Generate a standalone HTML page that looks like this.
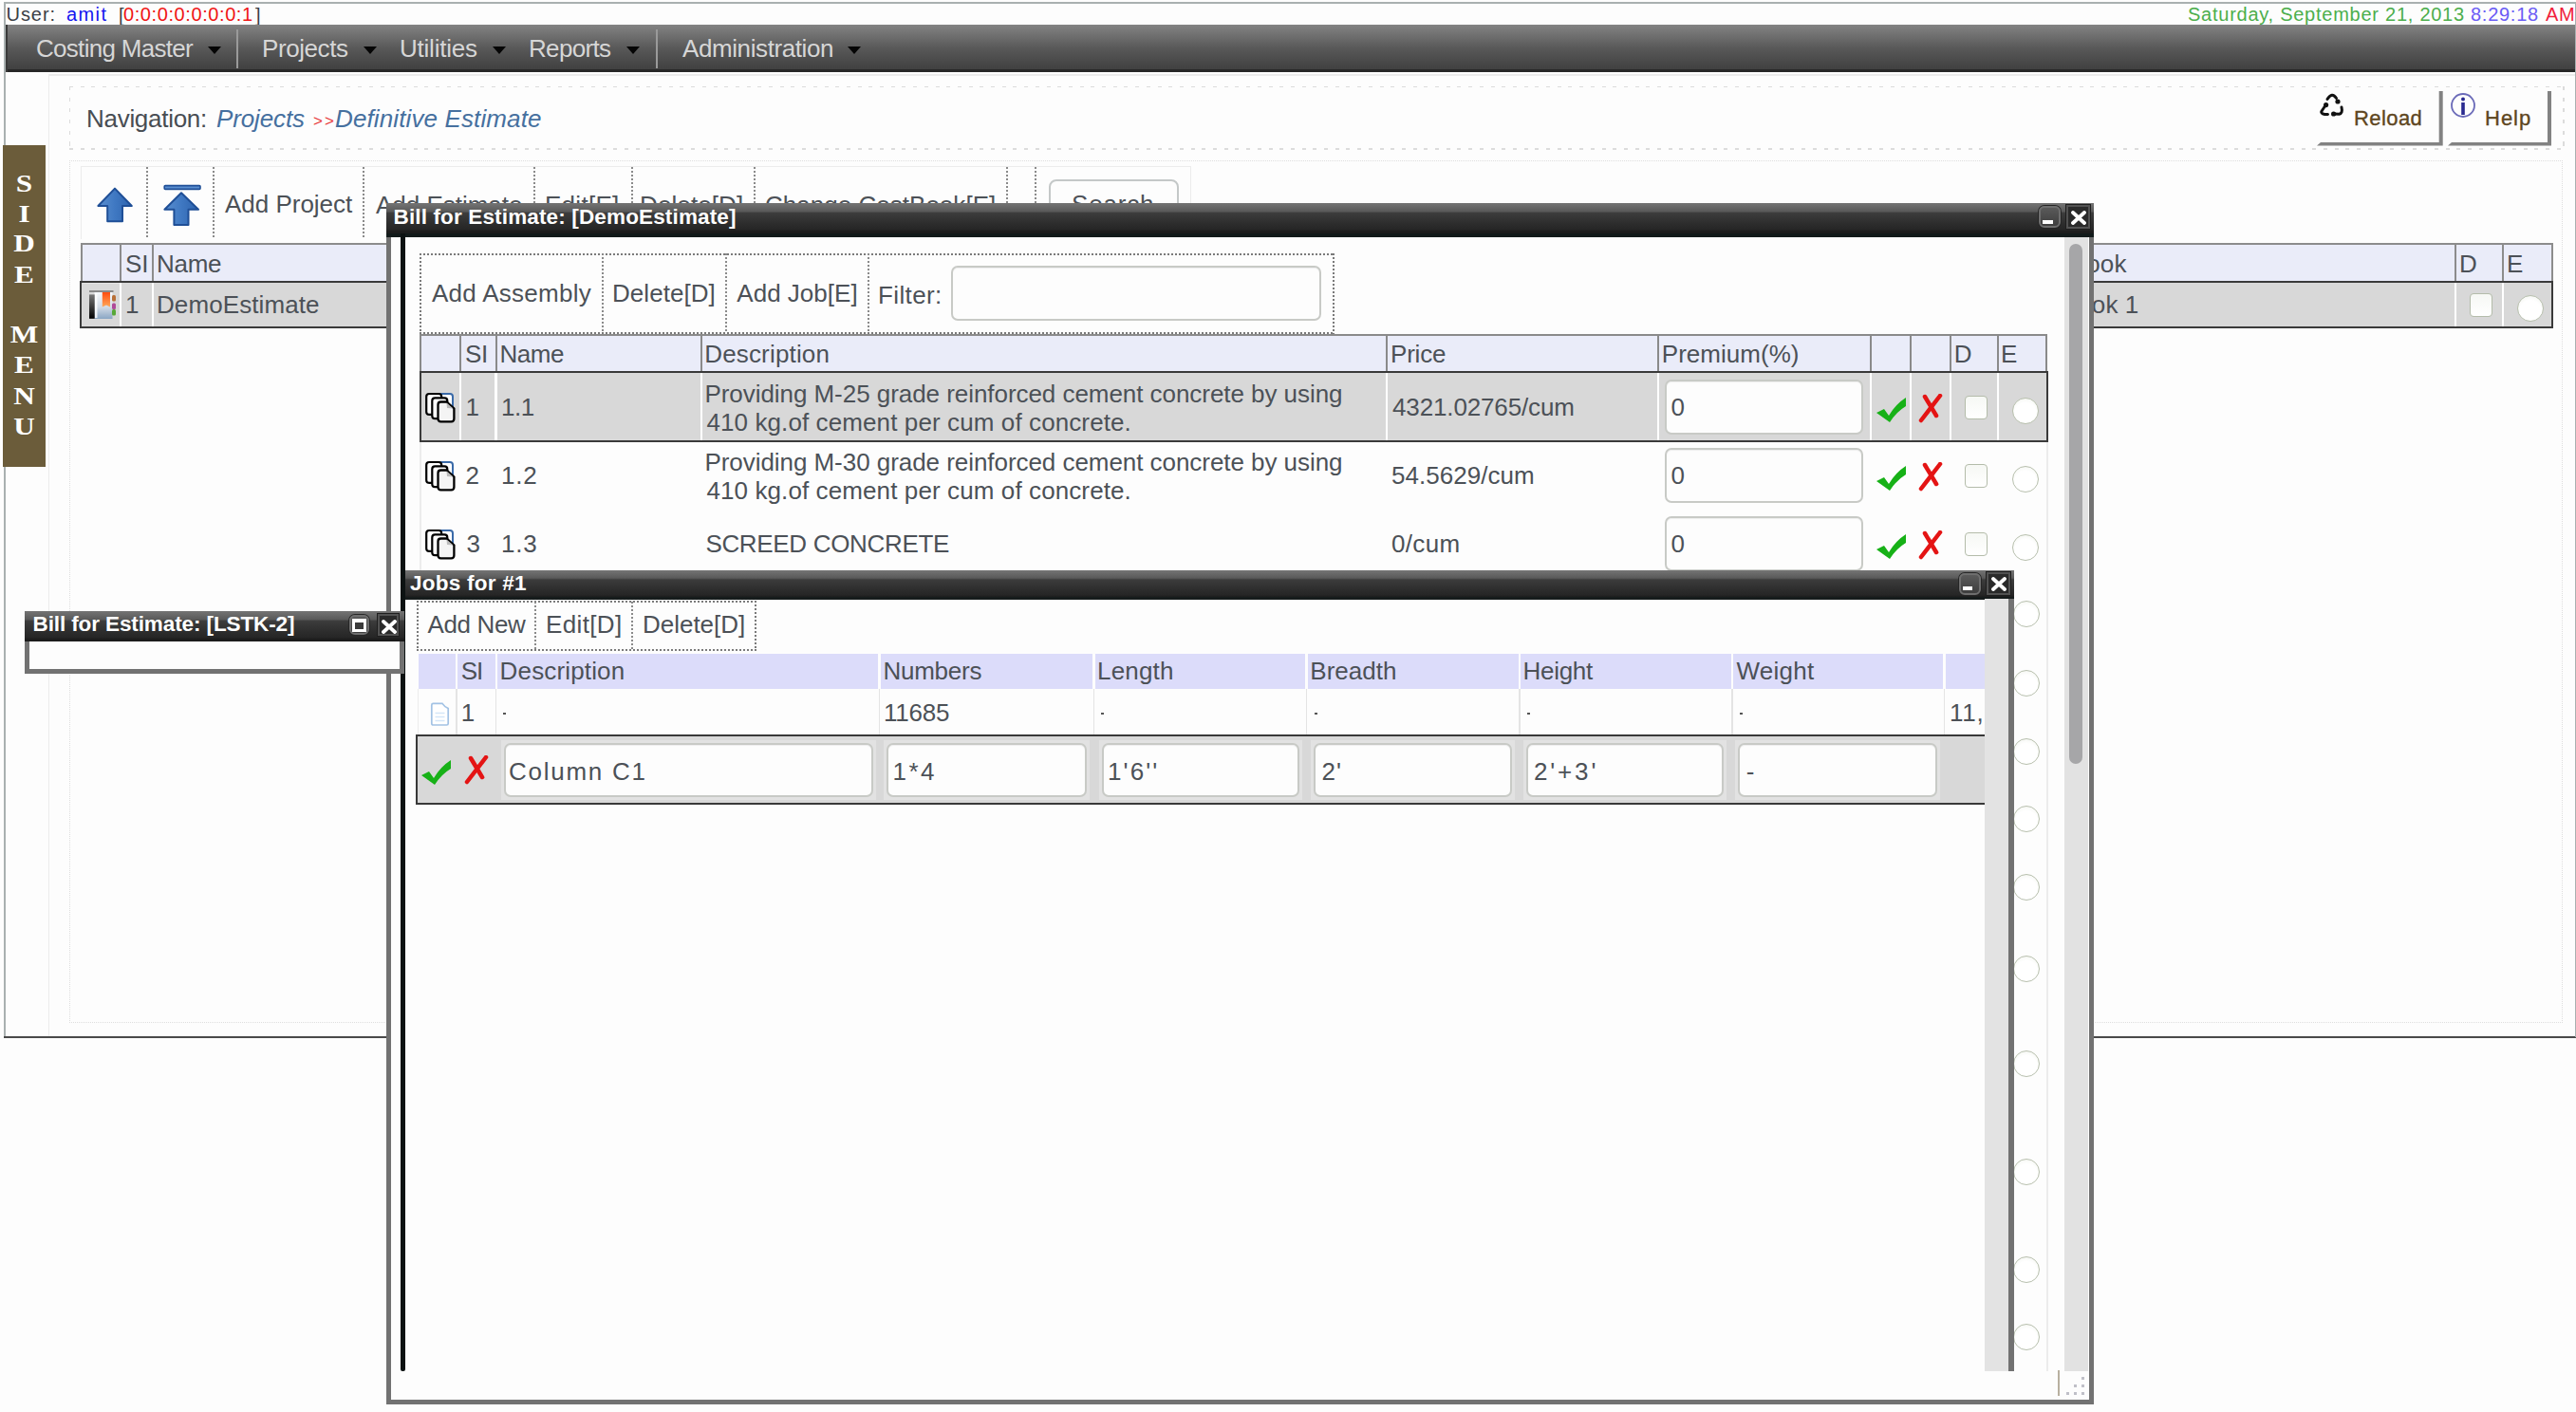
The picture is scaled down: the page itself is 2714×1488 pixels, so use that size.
<!DOCTYPE html>
<html><head><meta charset="utf-8"><title>Costing</title><style>html,body{margin:0;padding:0;width:2714px;height:1488px;overflow:hidden;background:#fdfdfd}body>div,body>svg{position:absolute;display:block}.t{white-space:pre;line-height:1}</style></head><body>
<div style="left:5.0px;top:2.0px;width:2709.0px;height:1.5px;background:#a9b0b0"></div>
<div style="left:4.0px;top:2.0px;width:2.0px;height:1091.0px;background:#a9b0b0"></div>
<div style="left:4.0px;top:1091.5px;width:2710.0px;height:2.0px;background:#4a4a4a"></div>
<div style="left:51.0px;top:78.0px;width:2663.0px;height:1.5px;background:#ececec"></div>
<div style="left:50.5px;top:78.0px;width:1.5px;height:1014.0px;background:#ececec"></div>
<div class="t" style="left:6.50px;top:5.00px;font:normal normal 20px 'Liberation Sans';line-height:1;color:#3b4045;letter-spacing:0.943px;">User:</div>
<div class="t" style="left:70.00px;top:5.00px;font:normal normal 20px 'Liberation Sans';line-height:1;color:#1414f0;letter-spacing:1.391px;">amit</div>
<div class="t" style="left:125.00px;top:5.50px;font:normal normal 20px 'Liberation Sans';line-height:1;color:#3b4045;letter-spacing:0.000px;">[</div>
<div class="t" style="left:130.00px;top:5.00px;font:normal normal 20px 'Liberation Sans';line-height:1;color:#f01414;letter-spacing:0.589px;">0:0:0:0:0:0:0:1</div>
<div class="t" style="left:269.00px;top:5.50px;font:normal normal 20px 'Liberation Sans';line-height:1;color:#3b4045;letter-spacing:0.000px;">]</div>
<div class="t" style="left:2305.00px;top:5.00px;font:normal normal 20px 'Liberation Sans';line-height:1;color:#4cae4c;letter-spacing:0.748px;">Saturday, September 21, 2013</div>
<div class="t" style="left:2603.00px;top:5.00px;font:normal normal 20px 'Liberation Sans';line-height:1;color:#6a5cf5;letter-spacing:0.732px;">8:29:18</div>
<div class="t" style="left:2682.00px;top:5.00px;font:normal normal 20px 'Liberation Sans';line-height:1;color:#f01e3c;letter-spacing:0.660px;">AM</div>
<div style="left:5.5px;top:26.0px;width:2708.5px;height:49.5px;background:linear-gradient(#838383,#585858 50%,#404040 95%,#282828 95%)"></div>
<div style="left:5.5px;top:26.0px;width:2.5px;height:49.5px;background:#3a3a3a"></div>
<div class="t" style="left:38.00px;top:38.40px;font:normal normal 26px 'Liberation Sans';line-height:1;color:#d6d6d6;letter-spacing:-0.706px;">Costing Master</div>
<svg style="left:219.0px;top:49.0px;" width="14" height="9" viewBox="0 0 14 9"><path d="M0 0H14L7 8Z" fill="#050505"/></svg>
<div class="t" style="left:276.00px;top:38.40px;font:normal normal 26px 'Liberation Sans';line-height:1;color:#d6d6d6;letter-spacing:-0.417px;">Projects</div>
<svg style="left:383.0px;top:49.0px;" width="14" height="9" viewBox="0 0 14 9"><path d="M0 0H14L7 8Z" fill="#050505"/></svg>
<div class="t" style="left:421.00px;top:38.40px;font:normal normal 26px 'Liberation Sans';line-height:1;color:#d6d6d6;letter-spacing:-0.224px;">Utilities</div>
<svg style="left:519.0px;top:49.0px;" width="14" height="9" viewBox="0 0 14 9"><path d="M0 0H14L7 8Z" fill="#050505"/></svg>
<div class="t" style="left:557.00px;top:38.40px;font:normal normal 26px 'Liberation Sans';line-height:1;color:#d6d6d6;letter-spacing:-0.673px;">Reports</div>
<svg style="left:660.0px;top:49.0px;" width="14" height="9" viewBox="0 0 14 9"><path d="M0 0H14L7 8Z" fill="#050505"/></svg>
<div class="t" style="left:719.00px;top:38.40px;font:normal normal 26px 'Liberation Sans';line-height:1;color:#d6d6d6;letter-spacing:-0.406px;">Administration</div>
<svg style="left:893.0px;top:49.0px;" width="14" height="9" viewBox="0 0 14 9"><path d="M0 0H14L7 8Z" fill="#050505"/></svg>
<div style="left:2713.0px;top:2.0px;width:1.0px;height:1091.0px;background:#a9b0b0"></div>
<div style="left:249.0px;top:31.0px;width:2.0px;height:41.0px;background:#9a9a9a"></div>
<div style="left:691.0px;top:31.0px;width:2.0px;height:41.0px;background:#9a9a9a"></div>
<div style="left:2.5px;top:152.5px;width:45.2px;height:339.2px;background:#6b5c3a"></div>
<div class="t" style="left:2.5px;width:45px;text-align:center;top:180.5px;font:bold 26px 'Liberation Serif';line-height:1;color:#fff;transform:scaleX(1.2)">S</div>
<div class="t" style="left:2.5px;width:45px;text-align:center;top:212.5px;font:bold 26px 'Liberation Serif';line-height:1;color:#fff;transform:scaleX(1.2)">I</div>
<div class="t" style="left:2.5px;width:45px;text-align:center;top:244.3px;font:bold 26px 'Liberation Serif';line-height:1;color:#fff;transform:scaleX(1.2)">D</div>
<div class="t" style="left:2.5px;width:45px;text-align:center;top:276.5px;font:bold 26px 'Liberation Serif';line-height:1;color:#fff;transform:scaleX(1.2)">E</div>
<div class="t" style="left:2.5px;width:45px;text-align:center;top:339.7px;font:bold 26px 'Liberation Serif';line-height:1;color:#fff;transform:scaleX(1.2)">M</div>
<div class="t" style="left:2.5px;width:45px;text-align:center;top:372.2px;font:bold 26px 'Liberation Serif';line-height:1;color:#fff;transform:scaleX(1.2)">E</div>
<div class="t" style="left:2.5px;width:45px;text-align:center;top:404.7px;font:bold 26px 'Liberation Serif';line-height:1;color:#fff;transform:scaleX(1.2)">N</div>
<div class="t" style="left:2.5px;width:45px;text-align:center;top:437.2px;font:bold 26px 'Liberation Serif';line-height:1;color:#fff;transform:scaleX(1.2)">U</div>
<div style="left:73.0px;top:90.5px;width:2628.0px;height:1.5px;background:repeating-linear-gradient(90deg,#dcdcdc 0 4px,transparent 4px 11.7px)"></div>
<div style="left:73.0px;top:156.0px;width:2628.0px;height:1.5px;background:repeating-linear-gradient(90deg,#dcdcdc 0 4px,transparent 4px 11.7px)"></div>
<div style="left:72.5px;top:91.0px;width:1.5px;height:66.0px;background:repeating-linear-gradient(#dcdcdc 0 4px,transparent 4px 11.7px)"></div>
<div style="left:2700.0px;top:91.0px;width:1.5px;height:66.0px;background:repeating-linear-gradient(#dcdcdc 0 4px,transparent 4px 11.7px)"></div>
<div class="t" style="left:91.00px;top:111.90px;font:normal normal 26px 'Liberation Sans';line-height:1;color:#484d53;letter-spacing:-0.285px;">Navigation:</div>
<div class="t" style="left:228.00px;top:111.90px;font:italic normal 26px 'Liberation Sans';line-height:1;color:#46709f;letter-spacing:-0.131px;">Projects</div>
<div class="t" style="left:330.00px;top:118.55px;font:normal normal 17px 'Liberation Sans';line-height:1;color:#e83a3a;letter-spacing:2.072px;">&gt;&gt;</div>
<div class="t" style="left:353.00px;top:111.90px;font:italic normal 26px 'Liberation Sans';line-height:1;color:#46709f;letter-spacing:0.120px;">Definitive Estimate</div>
<svg style="left:2441.0px;top:96.0px;" width="132.69999999999982" height="58" viewBox="0 0 132.69999999999982 58"><path d="M128.7 0 L128.7 4 L128.7 54 L4 54 L0 57.5 L132.7 57.5 L132.7 0Z" fill="#828282"/></svg>
<svg style="left:2579.0px;top:96.0px;" width="109" height="58" viewBox="0 0 109 58"><path d="M105.0 0 L105.0 4 L105.0 54 L4 54 L0 57.5 L109.0 57.5 L109.0 0Z" fill="#828282"/></svg>
<div class="t" style="left:2480.00px;top:114.30px;font:normal normal 22px 'Liberation Sans';line-height:1;color:#5e4620;letter-spacing:0.424px;-webkit-text-stroke:0.35px #5e4620">Reload</div>
<div class="t" style="left:2618.00px;top:114.30px;font:normal normal 22px 'Liberation Sans';line-height:1;color:#5e4620;letter-spacing:0.996px;-webkit-text-stroke:0.35px #5e4620">Help</div>
<svg style="left:2440.0px;top:94.0px;" width="36" height="34" viewBox="0 0 36 34"><g fill="none" stroke="#111" stroke-width="3" stroke-linecap="round"><path d="M12 10.5 Q17 2.5 21.5 9.5"/><path d="M10.5 16.5 Q8 20 5.8 23.5 Q5 26.5 12.5 26.6"/><path d="M19 26 L24.5 26.2 Q28.5 25.5 27 19"/></g><g fill="#111"><circle cx="23" cy="13" r="2.6"/><circle cx="10.6" cy="16.6" r="2.6"/><circle cx="18.6" cy="26" r="2.6"/></g></svg>
<svg style="left:2581.0px;top:97.0px;" width="28" height="28" viewBox="0 0 28 28"><circle cx="14" cy="14" r="12" fill="none" stroke="#6a6ab8" stroke-width="1.8"/><circle cx="14" cy="7.5" r="2" fill="#2a2a90"/><rect x="12.2" y="11" width="3.6" height="13" fill="#2a2a90"/></svg>
<div style="left:73.0px;top:169.0px;width:2627.0px;height:909.0px;border:1.5px dotted #dedede;box-sizing:border-box"></div>
<div style="left:85.0px;top:175.0px;width:1170.0px;height:77.0px;border:1px solid #ececec;border-bottom:none;box-sizing:border-box"></div>
<div style="left:154.0px;top:176.0px;width:2.0px;height:76.0px;background:repeating-linear-gradient(#8a8a8a 0 2px,transparent 2px 4px)"></div>
<div style="left:224.0px;top:176.0px;width:2.0px;height:76.0px;background:repeating-linear-gradient(#8a8a8a 0 2px,transparent 2px 4px)"></div>
<div style="left:382.0px;top:176.0px;width:2.0px;height:76.0px;background:repeating-linear-gradient(#8a8a8a 0 2px,transparent 2px 4px)"></div>
<div style="left:562.0px;top:176.0px;width:2.0px;height:76.0px;background:repeating-linear-gradient(#8a8a8a 0 2px,transparent 2px 4px)"></div>
<div style="left:665.0px;top:176.0px;width:2.0px;height:76.0px;background:repeating-linear-gradient(#8a8a8a 0 2px,transparent 2px 4px)"></div>
<div style="left:794.0px;top:176.0px;width:2.0px;height:76.0px;background:repeating-linear-gradient(#8a8a8a 0 2px,transparent 2px 4px)"></div>
<div style="left:1060.0px;top:176.0px;width:2.0px;height:76.0px;background:repeating-linear-gradient(#8a8a8a 0 2px,transparent 2px 4px)"></div>
<div style="left:1090.0px;top:176.0px;width:2.0px;height:76.0px;background:repeating-linear-gradient(#8a8a8a 0 2px,transparent 2px 4px)"></div>
<svg style="left:102.0px;top:196.5px;" width="39" height="39" viewBox="0 0 39 39"><defs><linearGradient id="ag" x1="0" x2="1"><stop offset="0" stop-color="#5a8fd0"/><stop offset="0.5" stop-color="#3f78c2"/><stop offset="1" stop-color="#2e63ad"/></linearGradient></defs><path d="M19 1.6 L36.8 20 L27 20 L27 36.2 L11.2 36.2 L11.2 20 L1.4 20Z" fill="url(#ag)" stroke="#1f4f97" stroke-width="2" stroke-linejoin="round"/></svg>
<svg style="left:172.0px;top:193.5px;" width="41" height="45" viewBox="0 0 41 45"><defs><linearGradient id="ag" x1="0" x2="1"><stop offset="0" stop-color="#5a8fd0"/><stop offset="0.5" stop-color="#3f78c2"/><stop offset="1" stop-color="#2e63ad"/></linearGradient></defs><rect x="1.2" y="1.6" width="37.8" height="3.8" rx="1" fill="#5a8fd0" stroke="#1f4f97" stroke-width="1.6"/><path d="M19 9.2 L37 26.8 L26.5 26.8 L26.5 43 L11.4 43 L11.4 26.8 L1.4 26.8Z" fill="url(#ag)" stroke="#1f4f97" stroke-width="2" stroke-linejoin="round"/></svg>
<div class="t" style="left:237.00px;top:201.50px;font:normal normal 26px 'Liberation Sans';line-height:1;color:#4c5157;letter-spacing:-0.018px;">Add Project</div>
<div class="t" style="left:396.00px;top:203.30px;font:normal normal 26px 'Liberation Sans';line-height:1;color:#4c5157;letter-spacing:-0.015px;">Add Estimate</div>
<div class="t" style="left:574.00px;top:203.30px;font:normal normal 26px 'Liberation Sans';line-height:1;color:#4c5157;letter-spacing:0.272px;">Edit[E]</div>
<div class="t" style="left:674.00px;top:203.30px;font:normal normal 26px 'Liberation Sans';line-height:1;color:#4c5157;letter-spacing:0.105px;">Delete[D]</div>
<div class="t" style="left:806.00px;top:203.30px;font:normal normal 26px 'Liberation Sans';line-height:1;color:#4c5157;letter-spacing:0.024px;">Change CostBook[E]</div>
<div style="left:1105.0px;top:188.5px;width:136.5px;height:71.5px;border:2px solid #c4c8c8;border-radius:8px;box-sizing:border-box;background:#fdfdfd"></div>
<div class="t" style="left:1129.00px;top:201.90px;font:normal normal 26px 'Liberation Sans';line-height:1;color:#4c5157;letter-spacing:0.816px;">Search</div>
<div style="left:84.5px;top:256.0px;width:2605.0px;height:40.0px;background:#eaecf9;border-top:2px solid #8c8c8c;border-left:2px solid #8c8c8c;border-right:2px solid #8c8c8c;box-sizing:border-box"></div>
<div style="left:125.7px;top:257.0px;width:2.0px;height:39.0px;background:#8c8c8c"></div>
<div style="left:159.7px;top:257.0px;width:2.0px;height:39.0px;background:#8c8c8c"></div>
<div style="left:2585.7px;top:257.0px;width:2.0px;height:39.0px;background:#8c8c8c"></div>
<div style="left:2636.0px;top:257.0px;width:2.0px;height:39.0px;background:#8c8c8c"></div>
<div class="t" style="left:132.00px;top:264.90px;font:normal normal 26px 'Liberation Sans';line-height:1;color:#4c5157;letter-spacing:0.000px;">SI</div>
<div class="t" style="left:165.00px;top:264.90px;font:normal normal 26px 'Liberation Sans';line-height:1;color:#4c5157;letter-spacing:-0.298px;">Name</div>
<div class="t" style="left:2127.00px;top:264.90px;font:normal normal 26px 'Liberation Sans';line-height:1;color:#4c5157;letter-spacing:0.100px;">CostBook</div>
<div class="t" style="left:2591.00px;top:264.90px;font:normal normal 26px 'Liberation Sans';line-height:1;color:#4c5157;letter-spacing:0.000px;">D</div>
<div class="t" style="left:2641.00px;top:264.90px;font:normal normal 26px 'Liberation Sans';line-height:1;color:#4c5157;letter-spacing:0.000px;">E</div>
<div style="left:84.0px;top:295.5px;width:2606.0px;height:50.5px;background:#d8d8d8;border:2.5px solid #3a3a3a;box-sizing:border-box"></div>
<div style="left:125.5px;top:298.0px;width:2.4px;height:45.5px;background:#ffffff"></div>
<div style="left:159.5px;top:298.0px;width:2.4px;height:45.5px;background:#ffffff"></div>
<div style="left:2585.5px;top:298.0px;width:2.4px;height:45.5px;background:#ffffff"></div>
<div style="left:2635.8px;top:298.0px;width:2.4px;height:45.5px;background:#ffffff"></div>
<div class="t" style="left:132.00px;top:307.90px;font:normal normal 26px 'Liberation Sans';line-height:1;color:#4c5157;letter-spacing:0.000px;">1</div>
<div class="t" style="left:165.00px;top:307.90px;font:normal normal 26px 'Liberation Sans';line-height:1;color:#4c5157;letter-spacing:0.087px;">DemoEstimate</div>
<div class="t" style="left:2118.00px;top:307.90px;font:normal normal 26px 'Liberation Sans';line-height:1;color:#4c5157;letter-spacing:0.100px;">CostBook 1</div>
<div style="left:2602.0px;top:308.5px;width:24.0px;height:25.0px;border:1.5px solid #b4bcaa;border-radius:4px;box-sizing:border-box;background:linear-gradient(#f6f8f4,#ffffff)"></div>
<div style="left:2652.0px;top:311.0px;width:28.0px;height:28.0px;border:1.5px solid #b8c0ae;border-radius:50%;box-sizing:border-box;background:radial-gradient(circle at 50% 60%,#ffffff 55%,#eef1ea)"></div>
<div style="left:87.0px;top:298.0px;width:39.0px;height:1.2px;background:#e2e2e2"></div>
<svg style="left:92.0px;top:305.0px;" width="32" height="33" viewBox="0 0 32 33"><defs><linearGradient id="bs" x1="0" y1="0" x2="0" y2="1"><stop offset="0" stop-color="#777"/><stop offset="1" stop-color="#000"/></linearGradient><linearGradient id="bp" x1="0" y1="0" x2="0" y2="1"><stop offset="0" stop-color="#f6f9fc"/><stop offset="0.55" stop-color="#d4dce6"/><stop offset="1" stop-color="#8aa6c4"/></linearGradient><linearGradient id="bm" x1="0" y1="0" x2="0" y2="1"><stop offset="0" stop-color="#ff4c10"/><stop offset="1" stop-color="#ffa858"/></linearGradient></defs><rect x="2" y="1" width="25.5" height="2" fill="#8a8a8a"/><rect x="7.5" y="3" width="19" height="28" fill="url(#bp)"/><rect x="8" y="4" width="2.5" height="26" fill="#fff" opacity="0.8"/><rect x="2" y="5.4" width="5.7" height="25.4" fill="url(#bs)"/><path d="M15.8 3 H24 V18.4 L20 16.5 L15.8 18.4Z" fill="url(#bm)"/><rect x="26" y="6" width="4" height="6.5" rx="1.5" fill="#b87038"/><rect x="26" y="14.5" width="4" height="6.5" rx="1.5" fill="#b04a98"/><rect x="26" y="21" width="4" height="6.5" rx="1.5" fill="#58a838"/></svg>
<div style="left:406.5px;top:213.5px;width:1799.0px;height:1266.0px;background:#fdfdfd;border:5.5px solid #727272;box-sizing:border-box"></div>
<div style="left:406.5px;top:213.5px;width:1799.0px;height:32.5px;background:linear-gradient(#747474,#5a5a5a 27%,#3c3c3c 33%,#2c2c2c 70%,#262626 86%,#1c1c1c 94%)"></div>
<div style="left:406.5px;top:246.0px;width:1799.0px;height:3.5px;background:#121a1a"></div>
<div class="t" style="left:414.50px;top:217.88px;font:normal bold 22.5px 'Liberation Sans';line-height:1;color:#ffffff;letter-spacing:0.146px;">Bill for Estimate: [DemoEstimate]</div>
<div style="left:2148.0px;top:217.0px;width:23.0px;height:23.0px;border:2px solid #6e6e6e;border-radius:6px;box-sizing:border-box;background:linear-gradient(#5a5a5a,#3e3e3e);box-shadow:0 0 0 1px #262626"></div>
<div style="left:2152.0px;top:231.5px;width:10.5px;height:4.0px;background:#fff"></div>
<div style="left:2177.0px;top:216.0px;width:24.5px;height:24.5px;border:2px solid #525252;box-sizing:border-box;background:#2a2a2a;box-shadow:0 0 0 1px #1e1e1e"></div>
<svg style="left:2181.5px;top:221.5px;" width="16" height="15" viewBox="0 0 16 15"><path d="M2 2 L14 13 M14 2 L2 13" stroke="#fff" stroke-width="3.8" stroke-linecap="round"/></svg>
<div style="left:422.0px;top:246.0px;width:4.5px;height:1199.0px;background:#0c1212;border-radius:0 0 2px 2px"></div>
<div style="left:2174.5px;top:249.5px;width:25.5px;height:1195.5px;background:#e2e2e2"></div>
<div style="left:2180.0px;top:257.0px;width:14.0px;height:548.0px;background:#a6a6a8;border-radius:7px"></div>
<div style="left:2168.0px;top:1444.0px;width:2.0px;height:27.0px;background:#b8b0a0"></div>
<div style="left:2192.5px;top:1450.5px;width:3.0px;height:3.0px;background:#c0c0c8"></div>
<div style="left:2184.5px;top:1458.5px;width:3.0px;height:3.0px;background:#c0c0c8"></div>
<div style="left:2192.5px;top:1458.5px;width:3.0px;height:3.0px;background:#c0c0c8"></div>
<div style="left:2176.5px;top:1466.5px;width:3.0px;height:3.0px;background:#c0c0c8"></div>
<div style="left:2184.5px;top:1466.5px;width:3.0px;height:3.0px;background:#c0c0c8"></div>
<div style="left:2192.5px;top:1466.5px;width:3.0px;height:3.0px;background:#c0c0c8"></div>
<div style="left:442.0px;top:266.5px;width:963.5px;height:2.0px;background:repeating-linear-gradient(90deg,#7a7a7a 0 2px,transparent 2px 4px)"></div>
<div style="left:442.0px;top:350.0px;width:963.5px;height:2.0px;background:repeating-linear-gradient(90deg,#7a7a7a 0 2px,transparent 2px 4px)"></div>
<div style="left:442.0px;top:266.5px;width:2.0px;height:85.5px;background:repeating-linear-gradient(#7a7a7a 0 2px,transparent 2px 4px)"></div>
<div style="left:1403.5px;top:266.5px;width:2.0px;height:85.5px;background:repeating-linear-gradient(#7a7a7a 0 2px,transparent 2px 4px)"></div>
<div style="left:633.7px;top:267.0px;width:2.0px;height:84.0px;background:repeating-linear-gradient(#8a8a8a 0 2px,transparent 2px 4px)"></div>
<div style="left:763.6px;top:267.0px;width:2.0px;height:84.0px;background:repeating-linear-gradient(#8a8a8a 0 2px,transparent 2px 4px)"></div>
<div style="left:913.6px;top:267.0px;width:2.0px;height:84.0px;background:repeating-linear-gradient(#8a8a8a 0 2px,transparent 2px 4px)"></div>
<div class="t" style="left:455.00px;top:295.90px;font:normal normal 26px 'Liberation Sans';line-height:1;color:#4c5157;letter-spacing:0.283px;">Add Assembly</div>
<div class="t" style="left:645.00px;top:295.90px;font:normal normal 26px 'Liberation Sans';line-height:1;color:#4c5157;letter-spacing:0.055px;">Delete[D]</div>
<div class="t" style="left:776.30px;top:295.90px;font:normal normal 26px 'Liberation Sans';line-height:1;color:#4c5157;letter-spacing:0.014px;">Add Job[E]</div>
<div class="t" style="left:925.00px;top:298.40px;font:normal normal 26px 'Liberation Sans';line-height:1;color:#4c5157;letter-spacing:0.371px;">Filter:</div>
<div style="left:1002.0px;top:280.0px;width:389.5px;height:58.0px;border:2px solid #c8cac6;border-radius:7px;box-sizing:border-box;background:#fdfdfd;box-shadow:inset 0 1px 1px #eee"></div>
<div style="left:442.0px;top:465.0px;width:1.5px;height:980.0px;background:#ececec"></div>
<div style="left:2156.0px;top:465.0px;width:1.5px;height:980.0px;background:#ececec"></div>
<div style="left:442.0px;top:351.5px;width:1715.0px;height:41.5px;background:#eaecf9;border-top:2px solid #8a8a8a;border-left:2px solid #8a8a8a;border-right:2px solid #8a8a8a;box-sizing:border-box"></div>
<div style="left:483.9px;top:353.0px;width:2.0px;height:39.0px;background:#8a8a8a"></div>
<div style="left:521.5px;top:353.0px;width:2.0px;height:39.0px;background:#8a8a8a"></div>
<div style="left:737.7px;top:353.0px;width:2.0px;height:39.0px;background:#8a8a8a"></div>
<div style="left:1459.8px;top:353.0px;width:2.0px;height:39.0px;background:#8a8a8a"></div>
<div style="left:1746.0px;top:353.0px;width:2.0px;height:39.0px;background:#8a8a8a"></div>
<div style="left:1970.0px;top:353.0px;width:2.0px;height:39.0px;background:#8a8a8a"></div>
<div style="left:2011.7px;top:353.0px;width:2.0px;height:39.0px;background:#8a8a8a"></div>
<div style="left:2054.0px;top:353.0px;width:2.0px;height:39.0px;background:#8a8a8a"></div>
<div style="left:2104.0px;top:353.0px;width:2.0px;height:39.0px;background:#8a8a8a"></div>
<div class="t" style="left:490.00px;top:359.60px;font:normal normal 26px 'Liberation Sans';line-height:1;color:#4c5157;letter-spacing:-0.342px;">SI</div>
<div class="t" style="left:526.50px;top:359.60px;font:normal normal 26px 'Liberation Sans';line-height:1;color:#4c5157;letter-spacing:-0.465px;">Name</div>
<div class="t" style="left:742.20px;top:359.60px;font:normal normal 26px 'Liberation Sans';line-height:1;color:#4c5157;letter-spacing:0.171px;">Description</div>
<div class="t" style="left:1465.00px;top:359.60px;font:normal normal 26px 'Liberation Sans';line-height:1;color:#4c5157;letter-spacing:-0.194px;">Price</div>
<div class="t" style="left:1750.80px;top:359.60px;font:normal normal 26px 'Liberation Sans';line-height:1;color:#4c5157;letter-spacing:0.023px;">Premium(%)</div>
<div class="t" style="left:2058.80px;top:359.60px;font:normal normal 26px 'Liberation Sans';line-height:1;color:#4c5157;letter-spacing:0.000px;">D</div>
<div class="t" style="left:2108.00px;top:359.60px;font:normal normal 26px 'Liberation Sans';line-height:1;color:#4c5157;letter-spacing:0.000px;">E</div>
<div style="left:442.0px;top:391.3px;width:1716.0px;height:74.7px;background:#d8d8d8;border:2.4px solid #3a3a3a;box-sizing:border-box"></div>
<div style="left:483.7px;top:393.0px;width:2.4px;height:71.0px;background:#ffffff"></div>
<div style="left:521.3px;top:393.0px;width:2.4px;height:71.0px;background:#ffffff"></div>
<div style="left:737.5px;top:393.0px;width:2.4px;height:71.0px;background:#ffffff"></div>
<div style="left:1459.6px;top:393.0px;width:2.4px;height:71.0px;background:#ffffff"></div>
<div style="left:1745.8px;top:393.0px;width:2.4px;height:71.0px;background:#ffffff"></div>
<div style="left:1969.8px;top:393.0px;width:2.4px;height:71.0px;background:#ffffff"></div>
<div style="left:2011.5px;top:393.0px;width:2.4px;height:71.0px;background:#ffffff"></div>
<div style="left:2053.8px;top:393.0px;width:2.4px;height:71.0px;background:#ffffff"></div>
<div style="left:2103.8px;top:393.0px;width:2.4px;height:71.0px;background:#ffffff"></div>
<svg style="left:447.0px;top:412.0px;" width="34" height="35" viewBox="0 0 34 35"><rect x="15" y="3" width="15" height="18" rx="3" fill="#fff" stroke="#3a6aa8" stroke-width="2"/><rect x="2.2" y="3" width="16" height="21.9" rx="3" fill="#fff" stroke="#000" stroke-width="2.2"/><rect x="8.3" y="7.4" width="16" height="21.8" rx="3" fill="#fff" stroke="#000" stroke-width="2.2"/><path d="M14.5 14.5 Q14.5 11.5 17.5 11.5 H23.5 L31.4 18.5 V29.3 Q31.4 32.3 28.4 32.3 H17.5 Q14.5 32.3 14.5 29.3Z" fill="#f4f4f4" stroke="#000" stroke-width="2.3"/><path d="M23.5 12.5 L24 18 L30.5 18.5Z" fill="#bbb"/></svg>
<div class="t" style="left:490.50px;top:415.50px;font:normal normal 26px 'Liberation Sans';line-height:1;color:#4c5157;letter-spacing:0.000px;">1</div>
<div class="t" style="left:528.00px;top:415.50px;font:normal normal 26px 'Liberation Sans';line-height:1;color:#4c5157;letter-spacing:-0.442px;">1.1</div>
<div class="t" style="left:742.40px;top:402.20px;font:normal normal 26px 'Liberation Sans';line-height:1;color:#4c5157;letter-spacing:-0.050px;">Providing M-25 grade reinforced cement concrete by using</div>
<div class="t" style="left:744.40px;top:432.10px;font:normal normal 26px 'Liberation Sans';line-height:1;color:#4c5157;letter-spacing:0.104px;">410 kg.of cement per cum of concrete.</div>
<div class="t" style="left:1467.00px;top:416.20px;font:normal normal 26px 'Liberation Sans';line-height:1;color:#4c5157;letter-spacing:-0.134px;">4321.02765/cum</div>
<div style="left:1754.0px;top:400.0px;width:209.0px;height:57.5px;border:2px solid #c8cac6;border-radius:7px;box-sizing:border-box;background:#fdfdfd;box-shadow:inset 0 1px 1px #eee"></div>
<div class="t" style="left:1760.50px;top:416.20px;font:normal normal 26px 'Liberation Sans';line-height:1;color:#4c5157;letter-spacing:0.000px;">0</div>
<svg style="left:1975.5px;top:417.5px;" width="33" height="28" viewBox="0 0 33 28"><path d="M1 17 L9 13 L14 20 Q21 8 32 1 L32 10 Q22 16 15 27 Z" fill="#17b117"/></svg>
<svg style="left:2021.0px;top:415.0px;" width="26" height="31" viewBox="0 0 26 31"><path d="M3 28 L23 2" stroke="#e41414" stroke-width="4.5" stroke-linecap="round"/><path d="M7 3 L19 23" stroke="#e41414" stroke-width="4.5" stroke-linecap="round"/></svg>
<div style="left:2070.0px;top:416.5px;width:24.0px;height:25.0px;border:1.5px solid #b4bcaa;border-radius:4px;box-sizing:border-box;background:linear-gradient(#f6f8f4,#ffffff)"></div>
<div style="left:2120.0px;top:419.0px;width:28.0px;height:28.0px;border:1.5px solid #b8c0ae;border-radius:50%;box-sizing:border-box;background:radial-gradient(circle at 50% 60%,#ffffff 55%,#eef1ea)"></div>
<svg style="left:447.0px;top:484.0px;" width="34" height="35" viewBox="0 0 34 35"><rect x="15" y="3" width="15" height="18" rx="3" fill="#fff" stroke="#3a6aa8" stroke-width="2"/><rect x="2.2" y="3" width="16" height="21.9" rx="3" fill="#fff" stroke="#000" stroke-width="2.2"/><rect x="8.3" y="7.4" width="16" height="21.8" rx="3" fill="#fff" stroke="#000" stroke-width="2.2"/><path d="M14.5 14.5 Q14.5 11.5 17.5 11.5 H23.5 L31.4 18.5 V29.3 Q31.4 32.3 28.4 32.3 H17.5 Q14.5 32.3 14.5 29.3Z" fill="#f4f4f4" stroke="#000" stroke-width="2.3"/><path d="M23.5 12.5 L24 18 L30.5 18.5Z" fill="#bbb"/></svg>
<div class="t" style="left:490.50px;top:487.50px;font:normal normal 26px 'Liberation Sans';line-height:1;color:#4c5157;letter-spacing:0.000px;">2</div>
<div class="t" style="left:528.00px;top:487.50px;font:normal normal 26px 'Liberation Sans';line-height:1;color:#4c5157;letter-spacing:0.800px;">1.2</div>
<div class="t" style="left:742.40px;top:474.20px;font:normal normal 26px 'Liberation Sans';line-height:1;color:#4c5157;letter-spacing:-0.050px;">Providing M-30 grade reinforced cement concrete by using</div>
<div class="t" style="left:744.40px;top:504.10px;font:normal normal 26px 'Liberation Sans';line-height:1;color:#4c5157;letter-spacing:0.104px;">410 kg.of cement per cum of concrete.</div>
<div class="t" style="left:1466.00px;top:488.20px;font:normal normal 26px 'Liberation Sans';line-height:1;color:#4c5157;letter-spacing:0.033px;">54.5629/cum</div>
<div style="left:1754.0px;top:472.0px;width:209.0px;height:57.5px;border:2px solid #c8cac6;border-radius:7px;box-sizing:border-box;background:#fdfdfd;box-shadow:inset 0 1px 1px #eee"></div>
<div class="t" style="left:1760.50px;top:488.20px;font:normal normal 26px 'Liberation Sans';line-height:1;color:#4c5157;letter-spacing:0.000px;">0</div>
<svg style="left:1975.5px;top:489.5px;" width="33" height="28" viewBox="0 0 33 28"><path d="M1 17 L9 13 L14 20 Q21 8 32 1 L32 10 Q22 16 15 27 Z" fill="#17b117"/></svg>
<svg style="left:2021.0px;top:487.0px;" width="26" height="31" viewBox="0 0 26 31"><path d="M3 28 L23 2" stroke="#e41414" stroke-width="4.5" stroke-linecap="round"/><path d="M7 3 L19 23" stroke="#e41414" stroke-width="4.5" stroke-linecap="round"/></svg>
<div style="left:2070.0px;top:488.5px;width:24.0px;height:25.0px;border:1.5px solid #b4bcaa;border-radius:4px;box-sizing:border-box;background:linear-gradient(#f6f8f4,#ffffff)"></div>
<div style="left:2120.0px;top:491.0px;width:28.0px;height:28.0px;border:1.5px solid #b8c0ae;border-radius:50%;box-sizing:border-box;background:radial-gradient(circle at 50% 60%,#ffffff 55%,#eef1ea)"></div>
<svg style="left:447.0px;top:556.0px;" width="34" height="35" viewBox="0 0 34 35"><rect x="15" y="3" width="15" height="18" rx="3" fill="#fff" stroke="#3a6aa8" stroke-width="2"/><rect x="2.2" y="3" width="16" height="21.9" rx="3" fill="#fff" stroke="#000" stroke-width="2.2"/><rect x="8.3" y="7.4" width="16" height="21.8" rx="3" fill="#fff" stroke="#000" stroke-width="2.2"/><path d="M14.5 14.5 Q14.5 11.5 17.5 11.5 H23.5 L31.4 18.5 V29.3 Q31.4 32.3 28.4 32.3 H17.5 Q14.5 32.3 14.5 29.3Z" fill="#f4f4f4" stroke="#000" stroke-width="2.3"/><path d="M23.5 12.5 L24 18 L30.5 18.5Z" fill="#bbb"/></svg>
<div class="t" style="left:491.50px;top:559.50px;font:normal normal 26px 'Liberation Sans';line-height:1;color:#4c5157;letter-spacing:0.000px;">3</div>
<div class="t" style="left:528.00px;top:559.50px;font:normal normal 26px 'Liberation Sans';line-height:1;color:#4c5157;letter-spacing:0.800px;">1.3</div>
<div class="t" style="left:743.40px;top:560.20px;font:normal normal 26px 'Liberation Sans';line-height:1;color:#4c5157;letter-spacing:-0.324px;">SCREED CONCRETE</div>
<div class="t" style="left:1466.00px;top:560.20px;font:normal normal 26px 'Liberation Sans';line-height:1;color:#4c5157;letter-spacing:0.339px;">0/cum</div>
<div style="left:1754.0px;top:544.0px;width:209.0px;height:57.5px;border:2px solid #c8cac6;border-radius:7px;box-sizing:border-box;background:#fdfdfd;box-shadow:inset 0 1px 1px #eee"></div>
<div class="t" style="left:1760.50px;top:560.20px;font:normal normal 26px 'Liberation Sans';line-height:1;color:#4c5157;letter-spacing:0.000px;">0</div>
<svg style="left:1975.5px;top:561.5px;" width="33" height="28" viewBox="0 0 33 28"><path d="M1 17 L9 13 L14 20 Q21 8 32 1 L32 10 Q22 16 15 27 Z" fill="#17b117"/></svg>
<svg style="left:2021.0px;top:559.0px;" width="26" height="31" viewBox="0 0 26 31"><path d="M3 28 L23 2" stroke="#e41414" stroke-width="4.5" stroke-linecap="round"/><path d="M7 3 L19 23" stroke="#e41414" stroke-width="4.5" stroke-linecap="round"/></svg>
<div style="left:2070.0px;top:560.5px;width:24.0px;height:25.0px;border:1.5px solid #b4bcaa;border-radius:4px;box-sizing:border-box;background:linear-gradient(#f6f8f4,#ffffff)"></div>
<div style="left:2120.0px;top:563.0px;width:28.0px;height:28.0px;border:1.5px solid #b8c0ae;border-radius:50%;box-sizing:border-box;background:radial-gradient(circle at 50% 60%,#ffffff 55%,#eef1ea)"></div>
<div style="left:2120.5px;top:633.4px;width:28.0px;height:28.0px;border:1.5px solid #b8c0ae;border-radius:50%;box-sizing:border-box;background:radial-gradient(circle at 50% 60%,#ffffff 55%,#eef1ea)"></div>
<div style="left:2120.5px;top:705.5px;width:28.0px;height:28.0px;border:1.5px solid #b8c0ae;border-radius:50%;box-sizing:border-box;background:radial-gradient(circle at 50% 60%,#ffffff 55%,#eef1ea)"></div>
<div style="left:2120.5px;top:777.8px;width:28.0px;height:28.0px;border:1.5px solid #b8c0ae;border-radius:50%;box-sizing:border-box;background:radial-gradient(circle at 50% 60%,#ffffff 55%,#eef1ea)"></div>
<div style="left:2120.5px;top:848.7px;width:28.0px;height:28.0px;border:1.5px solid #b8c0ae;border-radius:50%;box-sizing:border-box;background:radial-gradient(circle at 50% 60%,#ffffff 55%,#eef1ea)"></div>
<div style="left:2120.5px;top:921.2px;width:28.0px;height:28.0px;border:1.5px solid #b8c0ae;border-radius:50%;box-sizing:border-box;background:radial-gradient(circle at 50% 60%,#ffffff 55%,#eef1ea)"></div>
<div style="left:2120.5px;top:1007.3px;width:28.0px;height:28.0px;border:1.5px solid #b8c0ae;border-radius:50%;box-sizing:border-box;background:radial-gradient(circle at 50% 60%,#ffffff 55%,#eef1ea)"></div>
<div style="left:2120.5px;top:1107.0px;width:28.0px;height:28.0px;border:1.5px solid #b8c0ae;border-radius:50%;box-sizing:border-box;background:radial-gradient(circle at 50% 60%,#ffffff 55%,#eef1ea)"></div>
<div style="left:2120.5px;top:1221.3px;width:28.0px;height:28.0px;border:1.5px solid #b8c0ae;border-radius:50%;box-sizing:border-box;background:radial-gradient(circle at 50% 60%,#ffffff 55%,#eef1ea)"></div>
<div style="left:2120.5px;top:1323.7px;width:28.0px;height:28.0px;border:1.5px solid #b8c0ae;border-radius:50%;box-sizing:border-box;background:radial-gradient(circle at 50% 60%,#ffffff 55%,#eef1ea)"></div>
<div style="left:2120.5px;top:1394.9px;width:28.0px;height:28.0px;border:1.5px solid #b8c0ae;border-radius:50%;box-sizing:border-box;background:radial-gradient(circle at 50% 60%,#ffffff 55%,#eef1ea)"></div>
<div style="left:426.5px;top:600.5px;width:1695.5px;height:844.5px;background:#fdfdfd"></div>
<div style="left:426.5px;top:600.5px;width:1695.5px;height:30.5px;background:linear-gradient(#747474,#5a5a5a 27%,#3c3c3c 33%,#2c2c2c 70%,#262626 86%,#1c1c1c 94%)"></div>
<div style="left:426.5px;top:628.5px;width:1695.5px;height:3.0px;background:#161c1c"></div>
<div class="t" style="left:432.00px;top:603.88px;font:normal bold 22.5px 'Liberation Sans';line-height:1;color:#ffffff;letter-spacing:0.248px;">Jobs for #1</div>
<div style="left:2063.5px;top:603.5px;width:23.0px;height:23.0px;border:2px solid #6e6e6e;border-radius:6px;box-sizing:border-box;background:linear-gradient(#5a5a5a,#3e3e3e);box-shadow:0 0 0 1px #262626"></div>
<div style="left:2067.5px;top:618.0px;width:10.5px;height:4.0px;background:#fff"></div>
<div style="left:2093.0px;top:602.5px;width:24.5px;height:24.5px;border:2px solid #525252;box-sizing:border-box;background:#2a2a2a;box-shadow:0 0 0 1px #1e1e1e"></div>
<svg style="left:2097.5px;top:608.0px;" width="16" height="15" viewBox="0 0 16 15"><path d="M2 2 L14 13 M14 2 L2 13" stroke="#fff" stroke-width="3.8" stroke-linecap="round"/></svg>
<div style="left:2116.0px;top:631.0px;width:6.0px;height:814.0px;background:#727272"></div>
<div style="left:2090.5px;top:631.0px;width:25.5px;height:814.0px;background:#e3e3e3"></div>
<div style="left:438.5px;top:633.0px;width:358.5px;height:2.0px;background:repeating-linear-gradient(90deg,#7a7a7a 0 2px,transparent 2px 4px)"></div>
<div style="left:438.5px;top:683.5px;width:358.5px;height:2.0px;background:repeating-linear-gradient(90deg,#7a7a7a 0 2px,transparent 2px 4px)"></div>
<div style="left:438.5px;top:633.0px;width:2.0px;height:52.5px;background:repeating-linear-gradient(#7a7a7a 0 2px,transparent 2px 4px)"></div>
<div style="left:795.0px;top:633.0px;width:2.0px;height:52.5px;background:repeating-linear-gradient(#7a7a7a 0 2px,transparent 2px 4px)"></div>
<div style="left:563.4px;top:634.0px;width:2.0px;height:51.0px;background:repeating-linear-gradient(#8a8a8a 0 2px,transparent 2px 4px)"></div>
<div style="left:665.0px;top:634.0px;width:2.0px;height:51.0px;background:repeating-linear-gradient(#8a8a8a 0 2px,transparent 2px 4px)"></div>
<div class="t" style="left:450.60px;top:645.40px;font:normal normal 26px 'Liberation Sans';line-height:1;color:#4c5157;letter-spacing:-0.387px;">Add New</div>
<div class="t" style="left:575.00px;top:645.40px;font:normal normal 26px 'Liberation Sans';line-height:1;color:#4c5157;letter-spacing:0.366px;">Edit[D]</div>
<div class="t" style="left:677.00px;top:645.40px;font:normal normal 26px 'Liberation Sans';line-height:1;color:#4c5157;letter-spacing:-0.020px;">Delete[D]</div>
<div style="left:440.5px;top:688.5px;width:1650.0px;height:37.0px;background:#dcdcfa"></div>
<div style="left:479.7px;top:688.5px;width:2.6px;height:37.0px;background:#fdfdfd"></div>
<div style="left:521.5px;top:688.5px;width:2.6px;height:37.0px;background:#fdfdfd"></div>
<div style="left:925.4px;top:688.5px;width:2.6px;height:37.0px;background:#fdfdfd"></div>
<div style="left:1151.2px;top:688.5px;width:2.6px;height:37.0px;background:#fdfdfd"></div>
<div style="left:1375.4px;top:688.5px;width:2.6px;height:37.0px;background:#fdfdfd"></div>
<div style="left:1599.7px;top:688.5px;width:2.6px;height:37.0px;background:#fdfdfd"></div>
<div style="left:1823.7px;top:688.5px;width:2.6px;height:37.0px;background:#fdfdfd"></div>
<div style="left:2047.4px;top:688.5px;width:2.6px;height:37.0px;background:#fdfdfd"></div>
<div class="t" style="left:485.70px;top:694.20px;font:normal normal 26px 'Liberation Sans';line-height:1;color:#4c5157;letter-spacing:-1.042px;">SI</div>
<div class="t" style="left:526.60px;top:694.20px;font:normal normal 26px 'Liberation Sans';line-height:1;color:#4c5157;letter-spacing:0.151px;">Description</div>
<div class="t" style="left:930.40px;top:694.20px;font:normal normal 26px 'Liberation Sans';line-height:1;color:#4c5157;letter-spacing:-0.245px;">Numbers</div>
<div class="t" style="left:1156.00px;top:694.20px;font:normal normal 26px 'Liberation Sans';line-height:1;color:#4c5157;letter-spacing:0.187px;">Length</div>
<div class="t" style="left:1380.30px;top:694.20px;font:normal normal 26px 'Liberation Sans';line-height:1;color:#4c5157;letter-spacing:0.016px;">Breadth</div>
<div class="t" style="left:1604.60px;top:694.20px;font:normal normal 26px 'Liberation Sans';line-height:1;color:#4c5157;letter-spacing:-0.307px;">Height</div>
<div class="t" style="left:1829.50px;top:694.20px;font:normal normal 26px 'Liberation Sans';line-height:1;color:#4c5157;letter-spacing:0.255px;">Weight</div>
<div style="left:480.4px;top:726.0px;width:1.2px;height:48.0px;background:#e4e4e4"></div>
<div style="left:522.2px;top:726.0px;width:1.2px;height:48.0px;background:#e4e4e4"></div>
<div style="left:926.1px;top:726.0px;width:1.2px;height:48.0px;background:#e4e4e4"></div>
<div style="left:1151.9px;top:726.0px;width:1.2px;height:48.0px;background:#e4e4e4"></div>
<div style="left:1376.1px;top:726.0px;width:1.2px;height:48.0px;background:#e4e4e4"></div>
<div style="left:1600.4px;top:726.0px;width:1.2px;height:48.0px;background:#e4e4e4"></div>
<div style="left:1824.4px;top:726.0px;width:1.2px;height:48.0px;background:#e4e4e4"></div>
<div style="left:2048.1px;top:726.0px;width:1.2px;height:48.0px;background:#e4e4e4"></div>
<div style="left:440.0px;top:726.0px;width:1.2px;height:48.0px;background:#ececec"></div>
<svg style="left:453.0px;top:739.5px;" width="22" height="25" viewBox="0 0 22 25"><path d="M1.8 3 Q1.8 1.4 3.4 1.4 H13 Q15 4.5 19.2 6.6 V22.5 Q19.2 24 17.7 24 H3.4 Q1.8 24 1.8 22.5Z" fill="#fff" stroke="#a2c2e4" stroke-width="1.7"/><path d="M5.5 11.5 H15.5 M5.5 15.5 H15.5 M5.5 19.5 H15.5" stroke="#d4e6f8" stroke-width="1.6"/></svg>
<div class="t" style="left:485.70px;top:738.10px;font:normal normal 26px 'Liberation Sans';line-height:1;color:#4c5157;letter-spacing:0.000px;">1</div>
<div style="left:529.7px;top:750.5px;width:3.0px;height:2.0px;background:#555"></div>
<div style="left:1160.0px;top:750.5px;width:3.0px;height:2.0px;background:#555"></div>
<div style="left:1385.0px;top:750.5px;width:3.0px;height:2.0px;background:#555"></div>
<div style="left:1609.0px;top:750.5px;width:3.0px;height:2.0px;background:#555"></div>
<div style="left:1833.0px;top:750.5px;width:3.0px;height:2.0px;background:#555"></div>
<div class="t" style="left:931.00px;top:738.10px;font:normal normal 26px 'Liberation Sans';line-height:1;color:#4c5157;letter-spacing:-0.228px;">11685</div>
<div class="t" style="left:2054.00px;top:738.10px;font:normal normal 26px 'Liberation Sans';line-height:1;color:#4c5157;letter-spacing:0.800px;">11,</div>
<div style="left:438.0px;top:773.6px;width:1652.5px;height:74.0px;background:#d8d8d8;border-top:2.4px solid #383838;border-bottom:2.4px solid #383838;border-left:2.4px solid #383838;box-sizing:border-box"></div>
<svg style="left:442.5px;top:799.5px;" width="33" height="28" viewBox="0 0 33 28"><path d="M1 17 L9 13 L14 20 Q21 8 32 1 L32 10 Q22 16 15 27 Z" fill="#17b117"/></svg>
<svg style="left:489.0px;top:796.0px;" width="26" height="31" viewBox="0 0 26 31"><path d="M3 28 L23 2" stroke="#e41414" stroke-width="4.5" stroke-linecap="round"/><path d="M7 3 L19 23" stroke="#e41414" stroke-width="4.5" stroke-linecap="round"/></svg>
<div style="left:527.6px;top:779.5px;width:395.1px;height:63.0px;background:#e2e2e2"></div>
<div style="left:530.6px;top:782.5px;width:389.1px;height:57.0px;border:2px solid #c8cac6;border-radius:7px;box-sizing:border-box;background:#fdfdfd;box-shadow:inset 0 1px 1px #eee"></div>
<div class="t" style="left:536.10px;top:799.60px;font:normal normal 26px 'Liberation Sans';line-height:1;color:#4c5157;letter-spacing:1.714px;">Column C1</div>
<div style="left:931.4px;top:779.5px;width:217.1px;height:63.0px;background:#e2e2e2"></div>
<div style="left:934.4px;top:782.5px;width:211.1px;height:57.0px;border:2px solid #c8cac6;border-radius:7px;box-sizing:border-box;background:#fdfdfd;box-shadow:inset 0 1px 1px #eee"></div>
<div class="t" style="left:940.50px;top:799.60px;font:normal normal 26px 'Liberation Sans';line-height:1;color:#4c5157;letter-spacing:2.461px;">1*4</div>
<div style="left:1157.5px;top:779.5px;width:214.7px;height:63.0px;background:#e2e2e2"></div>
<div style="left:1160.5px;top:782.5px;width:208.7px;height:57.0px;border:2px solid #c8cac6;border-radius:7px;box-sizing:border-box;background:#fdfdfd;box-shadow:inset 0 1px 1px #eee"></div>
<div class="t" style="left:1167.00px;top:799.60px;font:normal normal 26px 'Liberation Sans';line-height:1;color:#4c5157;letter-spacing:2.113px;">1&#x27;6&#x27;&#x27;</div>
<div style="left:1381.0px;top:779.5px;width:214.8px;height:63.0px;background:#e2e2e2"></div>
<div style="left:1384.0px;top:782.5px;width:208.8px;height:57.0px;border:2px solid #c8cac6;border-radius:7px;box-sizing:border-box;background:#fdfdfd;box-shadow:inset 0 1px 1px #eee"></div>
<div class="t" style="left:1392.40px;top:799.60px;font:normal normal 26px 'Liberation Sans';line-height:1;color:#4c5157;letter-spacing:1.140px;">2&#x27;</div>
<div style="left:1604.8px;top:779.5px;width:214.7px;height:63.0px;background:#e2e2e2"></div>
<div style="left:1607.8px;top:782.5px;width:208.7px;height:57.0px;border:2px solid #c8cac6;border-radius:7px;box-sizing:border-box;background:#fdfdfd;box-shadow:inset 0 1px 1px #eee"></div>
<div class="t" style="left:1616.00px;top:799.60px;font:normal normal 26px 'Liberation Sans';line-height:1;color:#4c5157;letter-spacing:2.833px;">2&#x27;+3&#x27;</div>
<div style="left:1828.4px;top:779.5px;width:215.8px;height:63.0px;background:#e2e2e2"></div>
<div style="left:1831.4px;top:782.5px;width:209.8px;height:57.0px;border:2px solid #c8cac6;border-radius:7px;box-sizing:border-box;background:#fdfdfd;box-shadow:inset 0 1px 1px #eee"></div>
<div class="t" style="left:1839.70px;top:799.60px;font:normal normal 26px 'Liberation Sans';line-height:1;color:#4c5157;letter-spacing:0.000px;">-</div>
<div style="left:26.0px;top:644.0px;width:400.0px;height:66.0px;background:#fdfdfd;border:5.5px solid #727272;border-top:none;box-sizing:border-box"></div>
<div style="left:26.0px;top:644.0px;width:400.0px;height:32.0px;background:linear-gradient(#747474,#5a5a5a 27%,#3c3c3c 33%,#2c2c2c 70%,#262626 86%,#1c1c1c 94%)"></div>
<div class="t" style="left:34.50px;top:647.38px;font:normal bold 22.5px 'Liberation Sans';line-height:1;color:#ffffff;letter-spacing:-0.107px;">Bill for Estimate: [LSTK-2]</div>
<div style="left:368.0px;top:648.0px;width:21.0px;height:21.0px;border:2px solid #6e6e6e;border-radius:6px;box-sizing:border-box;background:linear-gradient(#5a5a5a,#3e3e3e);box-shadow:0 0 0 1px #262626"></div>
<div style="left:371.3px;top:651.6px;width:14.7px;height:14.4px;border:3px solid #fff;border-top-width:4.5px;box-sizing:border-box;background:#3a3a3a"></div>
<div style="left:397.5px;top:647.0px;width:22.5px;height:22.5px;border:2px solid #525252;box-sizing:border-box;background:#2a2a2a;box-shadow:0 0 0 1px #1e1e1e"></div>
<svg style="left:402.0px;top:652.5px;" width="16" height="15" viewBox="0 0 16 15"><path d="M2 2 L14 13 M14 2 L2 13" stroke="#fff" stroke-width="3.8" stroke-linecap="round"/></svg>
</body></html>
